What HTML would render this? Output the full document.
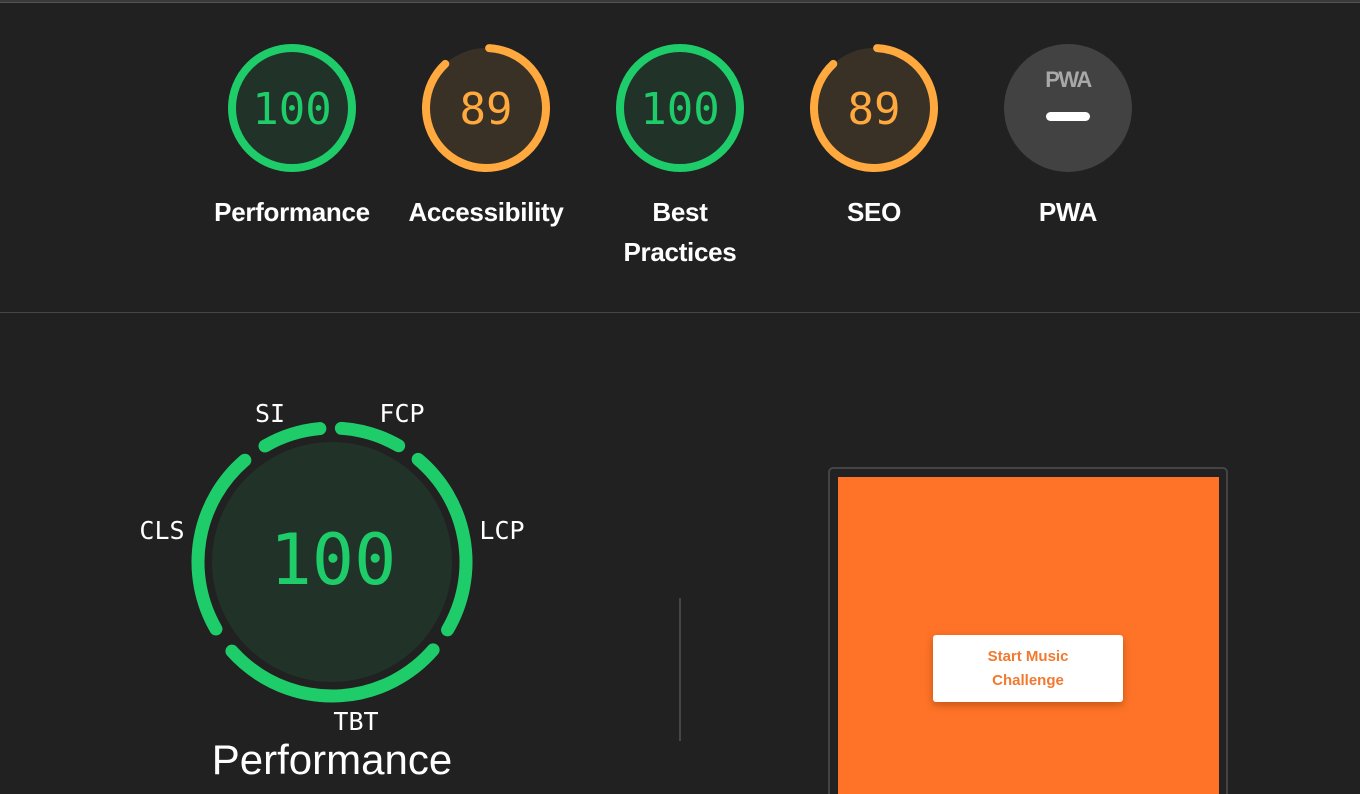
<!DOCTYPE html>
<html><head><meta charset="utf-8"><style>
html,body{margin:0;padding:0;background:#212121;width:1360px;height:794px;overflow:hidden;position:relative;font-family:"Liberation Sans",sans-serif;}
.abs{position:absolute}
.lbl{position:absolute;color:#fff;font-size:26px;font-weight:bold;text-align:center;width:200px;line-height:40px;letter-spacing:-0.3px}
.mono{font-family:"DejaVu Sans Mono","Liberation Mono",monospace}
</style></head><body>
<div class="abs" style="left:0;top:0;width:1360px;height:3px;background:#3a3a3a"></div>
<div class="abs" style="left:0;top:2px;width:1360px;height:1px;background:#555"></div>
<svg class="abs" style="left:0;top:0" width="1360" height="300">
 <g>
  <circle cx="292" cy="108" r="60" fill="#213228" stroke="#1fcc6a" stroke-width="8"/>
  <text x="292" y="124" text-anchor="middle" class="mono" font-size="44" fill="#1fcc6a">100</text>
 </g>
 <g>
  <circle cx="486" cy="108" r="60" fill="#3a3126"/>
  <circle cx="486" cy="108" r="60" fill="none" stroke="#ffa93e" stroke-width="8" stroke-linecap="round" stroke-dasharray="329 400" transform="rotate(-87 486 108)"/>
  <text x="486" y="124" text-anchor="middle" class="mono" font-size="44" fill="#ffa93e">89</text>
 </g>
 <g>
  <circle cx="680" cy="108" r="60" fill="#213228" stroke="#1fcc6a" stroke-width="8"/>
  <text x="680" y="124" text-anchor="middle" class="mono" font-size="44" fill="#1fcc6a">100</text>
 </g>
 <g>
  <circle cx="874" cy="108" r="60" fill="#3a3126"/>
  <circle cx="874" cy="108" r="60" fill="none" stroke="#ffa93e" stroke-width="8" stroke-linecap="round" stroke-dasharray="329 400" transform="rotate(-87 874 108)"/>
  <text x="874" y="124" text-anchor="middle" class="mono" font-size="44" fill="#ffa93e">89</text>
 </g>
 <g>
  <circle cx="1068" cy="108" r="64" fill="#424242"/>
  <text x="1068" y="87" text-anchor="middle" font-family="Liberation Sans" font-weight="bold" font-size="22" fill="#a8a8a8" letter-spacing="-1.5">PWA</text>
  <rect x="1046" y="112" width="44" height="9" rx="4.5" fill="#fff"/>
 </g>
</svg>
<div class="lbl" style="left:192px;top:192px">Performance</div>
<div class="lbl" style="left:386px;top:192px">Accessibility</div>
<div class="lbl" style="left:580px;top:192px">Best<br>Practices</div>
<div class="lbl" style="left:774px;top:192px">SEO</div>
<div class="lbl" style="left:968px;top:192px">PWA</div>
<div class="abs" style="left:0;top:312px;width:1360px;height:1px;background:#464646"></div>

<svg class="abs" style="left:0;top:380px" width="700" height="414">
 <g transform="translate(0,-380)">
  <circle cx="332" cy="562" r="120" fill="#213228"/>
  <g fill="none" stroke="#1fcc6a" stroke-width="13" stroke-linecap="round">
   <circle cx="332" cy="562" r="134" stroke-dasharray="60.4 900" transform="rotate(-86 332 562)"/>
   <circle cx="332" cy="562" r="134" stroke-dasharray="188 900" transform="rotate(-50 332 562)"/>
   <circle cx="332" cy="562" r="134" stroke-dasharray="227.5 900" transform="rotate(41 332 562)"/>
   <circle cx="332" cy="562" r="134" stroke-dasharray="185.7 900" transform="rotate(150 332 562)"/>
   <circle cx="332" cy="562" r="134" stroke-dasharray="58 900" transform="rotate(240 332 562)"/>
  </g>
  <text x="333" y="584" text-anchor="middle" class="mono" font-size="70" fill="#1fcc6a">100</text>
  <g class="mono" font-size="25" fill="#fff">
   <text x="270" y="422" text-anchor="middle">SI</text>
   <text x="402" y="422" text-anchor="middle">FCP</text>
   <text x="162" y="539" text-anchor="middle">CLS</text>
   <text x="502" y="539" text-anchor="middle">LCP</text>
   <text x="356" y="730" text-anchor="middle">TBT</text>
  </g>
  <text x="332" y="774" text-anchor="middle" font-family="Liberation Sans" font-size="42" fill="#fff">Performance</text>
 </g>
</svg>
<div class="abs" style="left:679px;top:598px;width:2px;height:143px;background:#464646"></div>

<div class="abs" style="left:828px;top:467px;width:396px;height:340px;border:2px solid #444;border-radius:5px;background:#222"></div>
<div class="abs" style="left:838px;top:477px;width:381px;height:317px;background:#fe7327"></div>
<div class="abs" style="left:933px;top:635px;width:190px;height:67px;background:#fff;border-radius:3px;box-shadow:0 3px 8px rgba(120,50,0,0.45);color:#f2792f;font-size:15px;font-weight:bold;text-align:center;line-height:24px;padding-top:10px;box-sizing:border-box">Start Music<br>Challenge</div>
</body></html>
